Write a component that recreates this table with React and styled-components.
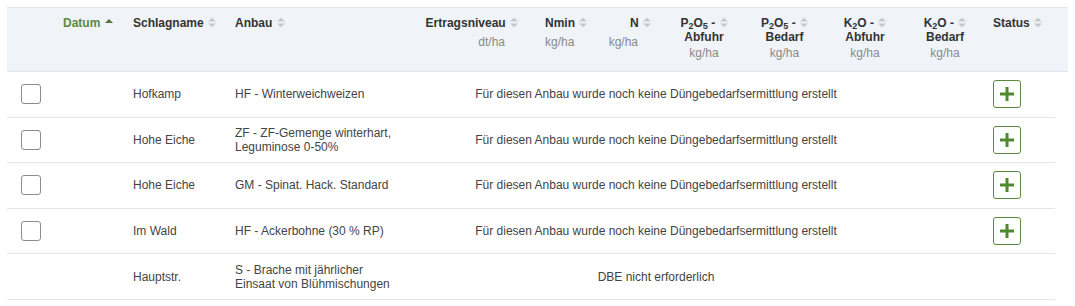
import React from "react"
import styled, { createGlobalStyle } from "styled-components"

const GlobalStyle = createGlobalStyle`
  body {
    margin: 0;
    background: #fff;
    font-family: "Liberation Sans", Arial, sans-serif;
    font-size: 12px;
    color: #444;
  }
`

const Sub = styled.sub`
  font-size: 9px;
  line-height: 0;
  vertical-align: -2px;
`

const GRID = "48px 70px 102px 188px 111px 74px 64px 80px 81px 80px 80px 1fr"

const columns = [
  { key: "check", label: null },
  { key: "datum", label: "Datum", active: true, pad: "0 8px" },
  { key: "schlag", label: "Schlagname", pad: "0 8px" },
  { key: "anbau", label: "Anbau", pad: "0 8px" },
  { key: "ertrag", label: "Ertragsniveau", unit: "dt/ha", align: "right", pad: "0 8px 0 0" },
  { key: "nmin", label: "Nmin", unit: "kg/ha", pad: "0 0 0 19px" },
  { key: "n", label: "N", unit: "kg/ha", align: "right", pad: "0 13px 0 0" },
  { key: "p_ab", label: <>P<Sub>2</Sub>O<Sub>5</Sub> -</>, second: "Abfuhr", unit: "kg/ha", align: "center" },
  { key: "p_be", label: <>P<Sub>2</Sub>O<Sub>5</Sub> -</>, second: "Bedarf", unit: "kg/ha", align: "center" },
  { key: "k_ab", label: <>K<Sub>2</Sub>O -</>, second: "Abfuhr", unit: "kg/ha", align: "center" },
  { key: "k_be", label: <>K<Sub>2</Sub>O -</>, second: "Bedarf", unit: "kg/ha", align: "center" },
  { key: "status", label: "Status", pad: "0 8px" },
]

const rows = [
  { schlag: "Hofkamp", anbau: "HF - Winterweichweizen", todo: true },
  { schlag: "Hohe Eiche", anbau: "ZF - ZF-Gemenge winterhart, Leguminose 0-50%", todo: true },
  { schlag: "Hohe Eiche", anbau: "GM - Spinat. Hack. Standard", todo: true },
  { schlag: "Im Wald", anbau: "HF - Ackerbohne (30 % RP)", todo: true },
  { schlag: "Hauptstr.", anbau: "S - Brache mit jährlicher Einsaat von Blühmischungen", todo: false },
]

function SortIcon({ active }) {
  if (active) {
    return (
      <svg width="8" height="11" viewBox="0 0 8 11">
        <path d="M0 6 L4 2 L8 6 Z" fill="#4f7339" />
      </svg>
    )
  }
  return (
    <svg width="8" height="11" viewBox="0 0 8 11">
      <path d="M0 4.6 L4 0.8 L8 4.6 Z" fill="#c3c8ce" />
      <path d="M0 6.4 L4 10.2 L8 6.4 Z" fill="#c3c8ce" />
    </svg>
  )
}

function PlusIcon() {
  return (
    <svg width="14" height="14" viewBox="0 0 14 14">
      <rect x="5.5" y="0" width="3" height="14" fill="#4e8a2d" />
      <rect x="0" y="5.5" width="14" height="3" fill="#4e8a2d" />
    </svg>
  )
}

export default function App() {
  return (
    <Page>
      <GlobalStyle />
      <Table>
        <HeaderRow>
          {columns.map(col => (
            <HeadCell key={col.key} $align={col.align} $pad={col.pad}>
              {col.label && (
                <>
                  <HeadLabel $active={col.active}>
                    {col.label} <SortIcon active={col.active} />
                    {col.second && (
                      <>
                        <br />
                        {col.second}
                      </>
                    )}
                  </HeadLabel>
                  {col.unit && (
                    <Unit $align={col.align} $tight={!!col.second}>
                      {col.unit}
                    </Unit>
                  )}
                </>
              )}
            </HeadCell>
          ))}
        </HeaderRow>
        <Body>
          {rows.map((row, i) => (
            <Row key={i}>
              <CheckCell>{row.todo && <Checkbox />}</CheckCell>
              <Cell />
              <Cell>{row.schlag}</Cell>
              <Cell $wrap>{row.anbau}</Cell>
              <Message>
                {row.todo
                  ? "Für diesen Anbau wurde noch keine Düngebedarfsermittlung erstellt"
                  : "DBE nicht erforderlich"}
              </Message>
              <Cell />
              <StatusCell>
                {row.todo && (
                  <AddButton>
                    <PlusIcon />
                  </AddButton>
                )}
              </StatusCell>
            </Row>
          ))}
        </Body>
      </Table>
    </Page>
  )
}

const Page = styled.div`
  padding: 7px 0 0 7px;
`

const Table = styled.div`
  width: 1061px;
`

const HeaderRow = styled.div`
  display: grid;
  grid-template-columns: ${GRID};
  height: 63px;
  background: #f0f3f8;
  border-top: 1px solid #e4e8ed;
  border-bottom: 1px solid #e2e6eb;
`

const HeadCell = styled.div`
  padding: ${p => p.$pad || "0"};
  padding-top: 8px;
  text-align: ${p => p.$align || "left"};
  white-space: nowrap;
`

const HeadLabel = styled.div`
  font-weight: bold;
  line-height: 14px;
  color: ${p => (p.$active ? "#5b8a3c" : "#333")};

  svg {
    vertical-align: -1px;
    margin-left: 1px;
  }
`

const Unit = styled.div`
  color: #8a8a8a;
  line-height: 16px;
  margin-top: ${p => (p.$tight ? "1px" : "4px")};
  padding-right: ${p => (p.$align === "right" ? "13px" : "0")};
`

const Body = styled.div`
  padding-right: 13px;
`

const Row = styled.div`
  display: grid;
  grid-template-columns: ${GRID};
  align-items: center;
  height: 45.6px;
  box-sizing: border-box;
  border-bottom: 1px solid #e4e6e9;
  line-height: 14px;
`

const Cell = styled.div`
  padding: ${p => (p.$wrap ? "0 16px 0 8px" : "0 8px")};
`

const CheckCell = styled.div`
  padding-left: 14px;
  display: flex;
  align-items: center;
`

const Checkbox = styled.div`
  width: 18px;
  height: 18px;
  border: 1px solid #8c8c8c;
  border-radius: 3px;
  background: #fff;
`

const Message = styled.div`
  grid-column: 5 / 11;
  text-align: center;
  padding-right: 8px;
  white-space: nowrap;
`

const StatusCell = styled.div`
  padding-left: 8px;
  display: flex;
  align-items: center;
`

const AddButton = styled.button`
  width: 28px;
  height: 28px;
  padding: 0;
  border: 1px solid #5b8a3c;
  border-radius: 3px;
  background: #fff;
  display: flex;
  align-items: center;
  justify-content: center;
  cursor: pointer;
`
